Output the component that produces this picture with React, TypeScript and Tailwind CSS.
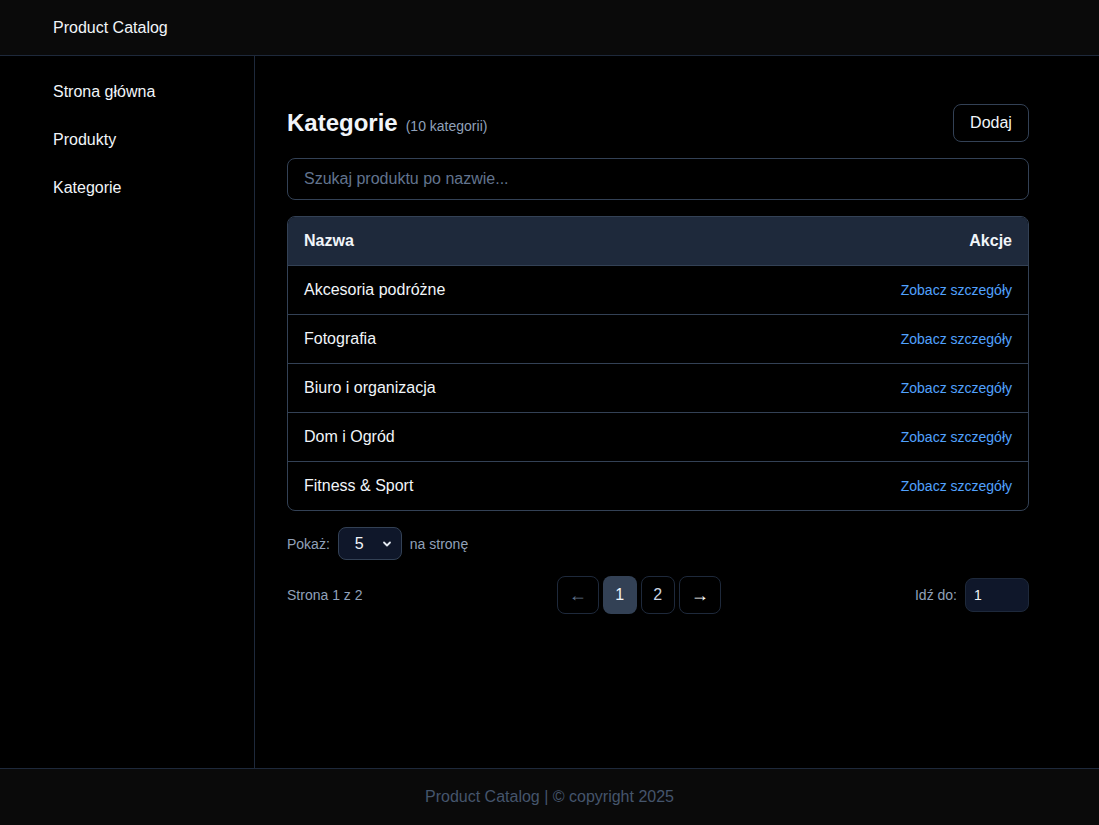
import React from "react";

const rows = [
  "Akcesoria podróżne",
  "Fotografia",
  "Biuro i organizacja",
  "Dom i Ogród",
  "Fitness & Sport",
];

export default function App() {
  return (
    <div
      className="min-h-screen flex flex-col bg-black text-white"
      style={{ fontFamily: '"Liberation Sans", Arial, sans-serif' }}
    >
      <header className="h-[56px] bg-[#0a0a0a] border-b border-[#1e293b] flex items-center px-[53px] shrink-0">
        <span className="text-base text-slate-100">Product Catalog</span>
      </header>
      <div className="flex flex-1">
        <aside className="w-[255px] shrink-0 border-r border-[#1e293b] pt-[12px] px-[53px]">
          <nav className="flex flex-col">
            <a className="h-12 flex items-center text-base text-slate-100">Strona główna</a>
            <a className="h-12 flex items-center text-base text-slate-100">Produkty</a>
            <a className="h-12 flex items-center text-base text-slate-100">Kategorie</a>
          </nav>
        </aside>
        <main className="flex-1 pt-12 pl-8">
          <div className="w-[742px] flex flex-col">
            <div className="flex items-center justify-between">
              <div className="flex items-baseline gap-2">
                <h1 className="text-2xl font-bold text-slate-100">Kategorie</h1>
                <span className="text-sm text-slate-400">(10 kategorii)</span>
              </div>
              <button className="h-[38px] w-[76px] rounded-lg border border-[#334155] text-base text-slate-100">
                Dodaj
              </button>
            </div>
            <div className="mt-4 h-[42px] rounded-lg border border-[#334155] flex items-center px-4">
              <span className="text-base text-slate-500">Szukaj produktu po nazwie...</span>
            </div>
            <div className="mt-4 rounded-lg border border-[#334155] overflow-hidden">
              <div className="h-[49px] bg-[#1e293b] border-b border-[#334155] flex items-center justify-between px-4">
                <span className="font-bold text-base text-slate-100">Nazwa</span>
                <span className="font-bold text-base text-slate-100">Akcje</span>
              </div>
              {rows.map((r, i) =>
                i < rows.length - 1 ? (
                  <div key={r} className="h-[49px] flex items-center justify-between px-4 border-b border-[#334155]">
                    <span className="text-base text-slate-100">{r}</span>
                    <a className="text-sm text-blue-400">Zobacz szczegóły</a>
                  </div>
                ) : (
                  <div key={r} className="h-[48px] flex items-center justify-between px-4">
                    <span className="text-base text-slate-100">{r}</span>
                    <a className="text-sm text-blue-400">Zobacz szczegóły</a>
                  </div>
                )
              )}
            </div>
            <div className="mt-4 flex items-center gap-2">
              <span className="text-sm text-slate-400">Pokaż:</span>
              <div className="h-[33px] w-[64px] rounded-lg border border-[#334155] bg-[#0f172a] flex items-center justify-between pl-4 pr-2">
                <span className="text-base text-slate-100">5</span>
                <svg width="12" height="12" viewBox="0 0 12 12" fill="none">
                  <path d="M3 4.5 L6 7.5 L9 4.5" stroke="#e2e8f0" strokeWidth="1.8" strokeLinecap="round" strokeLinejoin="round" />
                </svg>
              </div>
              <span className="text-sm text-slate-400">na stronę</span>
            </div>
            <div className="mt-4 flex items-center justify-between">
              <span className="text-sm text-slate-400">Strona 1 z 2</span>
              <div className="flex items-center gap-1">
                <button className="h-[38px] w-[42px] rounded-lg border border-[#1e293b] text-slate-500 text-lg flex items-center justify-center">
                  ←
                </button>
                <button className="h-[38px] w-[34px] rounded-lg bg-[#334155] text-slate-100 text-base flex items-center justify-center">
                  1
                </button>
                <button className="h-[38px] w-[34px] rounded-lg border border-[#1e293b] text-slate-300 text-base flex items-center justify-center">
                  2
                </button>
                <button className="h-[38px] w-[42px] rounded-lg border border-[#1e293b] text-white text-lg flex items-center justify-center">
                  →
                </button>
              </div>
              <div className="flex items-center gap-2">
                <span className="text-sm text-slate-400">Idź do:</span>
                <div className="h-[34px] w-[64px] rounded-lg border border-[#1e293b] bg-[#0f172a] flex items-center px-2">
                  <span className="text-sm text-slate-100">1</span>
                </div>
              </div>
            </div>
          </div>
        </main>
      </div>
      <footer className="h-[57px] shrink-0 bg-[#0a0a0a] border-t border-[#1e293b] flex items-center justify-center">
        <span className="text-base text-slate-600">Product Catalog | © copyright 2025</span>
      </footer>
    </div>
  );
}
